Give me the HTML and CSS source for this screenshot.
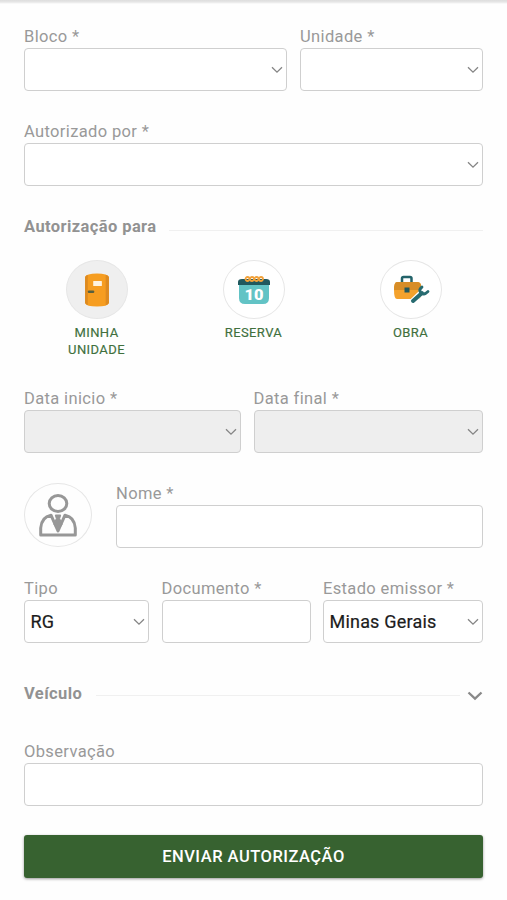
FILE: index.html
```html
<!DOCTYPE html>
<html lang="pt-BR">
<head>
<meta charset="utf-8">
<title>Autorização</title>
<link rel="stylesheet" href="styles.css">
</head>
<body>
<svg width="0" height="0" class="defs"><symbol id="chev" viewBox="0 0 12 8"><path d="M1 1.2 6 6.2 11 1.2" fill="none" stroke="currentColor" stroke-width="1.3"/></symbol></svg>
<div class="topbar"></div>
<main class="form">
  <div class="row cols-block">
    <div class="field"><span class="label">Bloco *</span><div class="box"><svg class="chev"><use href="#chev"/></svg></div></div>
    <div class="field"><span class="label">Unidade *</span><div class="box"><svg class="chev"><use href="#chev"/></svg></div></div>
  </div>
  <div class="row">
    <div class="field"><span class="label">Autorizado por *</span><div class="box"><svg class="chev"><use href="#chev"/></svg></div></div>
  </div>
  <div class="heading"><h2>Autorização para</h2><span class="rule"></span></div>
  <div class="options">
    <div class="option">
      <div class="circle active"><svg width="26" height="36" viewBox="0 0 24 36" preserveAspectRatio="none">
        <path d="M1 5Q2 1.500 12 1.500T23 5V31Q22 34.500 12 34.500T1 31Z" fill="#f69d20"/>
        <path d="M1 5Q1.500 3.500 3.500 2.800V33.200Q1.500 32.500 1 31ZM20 2.700Q22.500 3.500 23 5V31Q22.500 32.500 20 33.300Z" fill="#dd8a20"/>
        <rect x="8.500" y="9" width="8" height="5" rx=".5" fill="#fff3df"/>
        <rect x="3.500" y="18.500" width="6" height="2.500" rx="1" fill="#57603f"/></svg></div>
      <span class="caption">MINHA<br>UNIDADE</span>
    </div>
    <div class="option">
      <div class="circle"><svg width="34" height="30" viewBox="0 0 34 30">
        <path d="M2 9H32V23Q32 29 26 29H8Q2 29 2 23Z" fill="#62c3c5"/>
        <path d="M1 10V7Q1 4 5 4H29Q33 4 33 7V10Z" fill="#21585e"/>
        <g fill="none" stroke="#f1a13a" stroke-width="1.800"><circle cx="10.500" cy="4" r="2"/><circle cx="15" cy="4" r="2"/><circle cx="19.500" cy="4" r="2"/><circle cx="24" cy="4" r="2"/></g>
        <text x="17" y="25.200" text-anchor="middle" class="day" textLength="19" lengthAdjust="spacingAndGlyphs">10</text></svg></div>
      <span class="caption">RESERVA</span>
    </div>
    <div class="option">
      <div class="circle"><svg width="38" height="30" viewBox="0 0 38 30">
        <path d="M10 8V3.500Q10 2 11.500 2H18Q19.500 2 19.500 3.500V8" fill="none" stroke="#23636a" stroke-width="2.500"/>
        <path d="M5 7H25Q29 7 29 11V20Q29 24 25 24H5Q2 24 2 15Q2 7 5 7Z" fill="#f4a22d"/>
        <path d="M5 7H25Q29 7 29 11V15H2Q2 7 5 7Z" fill="#d78d27"/>
        <rect x="12.500" y="12.500" width="5" height="5" fill="#23585c"/>
        <path d="M20.500 26 29.500 17.500" stroke="#fff" stroke-width="5.500"/>
        <path d="M21 26 30 18" stroke="#276b70" stroke-width="4" stroke-linecap="round"/>
        <path d="M30 12Q26.500 14.500 28.500 17.500Q31.500 21 36 16.500" fill="none" stroke="#276b70" stroke-width="2.800" stroke-linecap="round"/></svg></div>
      <span class="caption">OBRA</span>
    </div>
  </div>
  <div class="row cols-date">
    <div class="field"><span class="label">Data inicio *</span><div class="box disabled"><svg class="chev"><use href="#chev"/></svg></div></div>
    <div class="field"><span class="label">Data final *</span><div class="box disabled"><svg class="chev"><use href="#chev"/></svg></div></div>
  </div>
  <div class="row cols-person">
    <div class="avatar"><svg width="40" height="44" viewBox="0 0 40 44" fill="none" stroke="#979797" stroke-width="3" stroke-linejoin="round">
      <ellipse cx="20" cy="10.500" rx="8.800" ry="8"/>
      <path d="M2.700 42V35Q3.500 24 13 22.200L20 38 27 22.200Q36.500 24 37.300 35V42Z"/>
      <path d="M17.300 22H22.700L21.700 25.500 24 31.500 20 37.500 16 31.500 18.300 25.500Z" fill="#979797" stroke-width="1"/></svg></div>
    <div class="field"><span class="label">Nome *</span><div class="box"></div></div>
  </div>
  <div class="row cols-doc">
    <div class="field"><span class="label">Tipo</span><div class="box"><span class="value">RG</span><svg class="chev"><use href="#chev"/></svg></div></div>
    <div class="field"><span class="label">Documento *</span><div class="box"></div></div>
    <div class="field"><span class="label">Estado emissor *</span><div class="box"><span class="value">Minas Gerais</span><svg class="chev"><use href="#chev"/></svg></div></div>
  </div>
  <div class="heading vehicle"><h2>Veículo</h2><span class="rule"></span><svg class="toggle" width="16" height="10" viewBox="0 0 16 10"><path d="M1.500 1.500 8 7.700 14.500 1.500" fill="none" stroke="#898989" stroke-width="2.300"/></svg></div>
  <div class="row">
    <div class="field"><span class="label">Observação</span><div class="box"></div></div>
  </div>
  <button class="submit">ENVIAR AUTORIZAÇÃO</button>
</main>
</body>
</html>
```

FILE: styles.css
```css
* { box-sizing: border-box; }
body { margin: 0; background: #fefefe; font-family: Roboto, "Liberation Sans", sans-serif; height: 900px; overflow: hidden; }
.defs { display: block; }
.topbar { height: 4px; background: linear-gradient(#dddddd, #e6e6e6 50%, #fefefe); }
.form { padding: 22px 24px 0; }
.row { display: grid; gap: 12px; margin-bottom: 30px; }
.cols-block { grid-template-columns: 263px 1fr; gap: 13px; }
.cols-date { grid-template-columns: 217px 1fr; gap: 12.500px; }
.cols-person { grid-template-columns: 68px 1fr; gap: 24px; }
.cols-doc { grid-template-columns: 125px 149px 1fr; gap: 12.500px; }
.label { display: block; height: 22px; line-height: 21px; font-size: 16.500px; letter-spacing: .36px; color: #999; white-space: nowrap; }
.box { height: 43px; border: 1px solid #cfcfcf; border-radius: 4px; background: #fff; display: flex; align-items: center; padding: 0 3.500px 0 5.500px; }
.disabled { background: #eee; }
.chev { width: 12px; height: 8px; margin-left: auto; color: #858585; }
.value { font-size: 18px; letter-spacing: .2px; color: #1c1c1c; -webkit-text-stroke: .2px #1c1c1c; white-space: nowrap; }
.heading { display: flex; align-items: center; height: 20px; }
.heading h2 { margin: 0; font-size: 16.500px; font-weight: 700; letter-spacing: .4px; color: #929292; }
.rule { flex: 1; height: 1px; background: #f0f0f0; margin: 9px 0 0 12px; }
.options { display: flex; justify-content: space-between; margin: 24px 22px 30px 22px; height: 98px; }
.option { width: 101px; display: flex; flex-direction: column; align-items: center; }
.circle { width: 62px; height: 59px; border: 1px solid #e6e6e6; border-radius: 50%; background: #fff; display: flex; align-items: center; justify-content: center; margin-bottom: 5px; }
.circle.active { background: #efefef; }
.caption { font-size: 13px; line-height: 17px; letter-spacing: .4px; color: #40703d; -webkit-text-stroke: .15px #40703d; text-align: center; }
.day { font: 900 15px Roboto, sans-serif; fill: #fff; }
.avatar { width: 68px; height: 64px; border: 1px solid #e6e6e6; border-radius: 50%; display: flex; align-items: center; justify-content: center; }
.vehicle { margin-top: 40px; margin-bottom: 38px; }
.vehicle .rule { margin: 4px 7px 0 14px; }
.toggle { margin-top: 6px; }
.submit { display: block; width: 100%; height: 43px; margin-top: -1px; border: 0; border-radius: 3px; background: #376230; box-shadow: 0 1px 3px rgba(0,0,0,.4); color: #fff; font: 500 16.500px Roboto, sans-serif; letter-spacing: .5px; }
```
